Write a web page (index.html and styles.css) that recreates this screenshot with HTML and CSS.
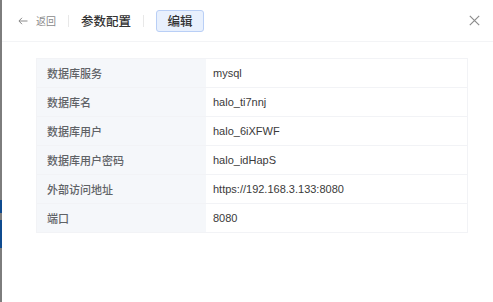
FILE: index.html
```html
<!DOCTYPE html>
<html lang="zh">
<head>
<meta charset="utf-8">
<link rel="stylesheet" href="styles.css">
</head>
<body>
<div class="frame">
  <div class="edge">
    <span class="edge-gray1"></span>
    <span class="edge-blue1"></span>
    <span class="edge-gray2"></span>
    <span class="edge-blue2"></span>
    <span class="edge-gray3"></span>
  </div>
  <div class="panel">
    <header class="head">
      <div class="back">
        <svg class="arrow" width="10" height="8" viewBox="0 0 10 8"><path d="M4 0.8 L0.9 4 L4 7.2 M1 4 H9.5" fill="none" stroke="#8a8a8a" stroke-width="1"/></svg>
        <span>返回</span>
      </div>
      <span class="sep"></span>
      <h1 class="title">参数配置</h1>
      <span class="sep"></span>
      <button class="edit">编辑</button>
      <svg class="close" width="11" height="11" viewBox="0 0 11 11"><path d="M0.8 0.8 L10.2 10.2 M10.2 0.8 L0.8 10.2" stroke="#8c8c8c" stroke-width="1.2" fill="none"/></svg>
    </header>
    <div class="body">
      <table class="info">
        <tr><th>数据库服务</th><td>mysql</td></tr>
        <tr><th>数据库名</th><td>halo_ti7nnj</td></tr>
        <tr><th>数据库用户</th><td>halo_6iXFWF</td></tr>
        <tr><th>数据库用户密码</th><td>halo_idHapS</td></tr>
        <tr><th>外部访问地址</th><td>https://192.168.3.133:8080</td></tr>
        <tr><th>端口</th><td>8080</td></tr>
      </table>
    </div>
  </div>
</div>
</body>
</html>
```

FILE: styles.css
```css
html, body {
  margin: 0;
  padding: 0;
  background: #fff;
}
body {
  width: 493px;
  height: 302px;
  overflow: hidden;
  font-family: "Liberation Sans", "Noto Sans CJK SC", sans-serif;
}
.frame {
  display: flex;
  height: 302px;
}
.edge {
  width: 2px;
  display: flex;
  flex-direction: column;
  flex: none;
}
.edge span { display: block; }
.edge-gray1 { height: 200px; background: #7d7d7d; }
.edge-blue1 { height: 13px; background: #0f4b8f; }
.edge-gray2 { height: 7px; background: #7d7d7d; }
.edge-blue2 { height: 28px; background: #0f4b8f; }
.edge-gray3 { flex: 1; background: #7d7d7d; }
.panel {
  flex: 1;
  display: flex;
  flex-direction: column;
}
.head {
  height: 41px;
  border-bottom: 1px solid #f3f4f6;
  display: flex;
  align-items: center;
  padding: 0 0 0 16px;
}
.back {
  display: flex;
  align-items: center;
  color: #8a8a8a;
  font-size: 10px;
}
.arrow { margin-right: 8px; }
.sep {
  width: 1px;
  height: 12px;
  background: #e8e8e8;
  margin: 0 12px;
}
.title {
  margin: 0;
  font-size: 12.5px;
  font-weight: 500;
  color: #333;
}
.edit {
  width: 48px;
  height: 22px;
  background: #e8f0fd;
  border: 1px solid #b9cff6;
  border-radius: 3px;
  font-family: inherit;
  font-size: 12.5px;
  font-weight: 500;
  color: #333;
  padding: 0;
}
.close {
  margin-left: auto;
  margin-right: 13px;
}
.body {
  padding: 16px 0 0 34px;
}
.info {
  border-collapse: collapse;
  width: 432px;
  font-size: 11px;
  border: 1px solid #f2f3f6;
}
.info th, .info td {
  height: 28px;
  padding: 0 0 0 10px;
  text-align: left;
  border-top: 1px solid #f2f3f6;
}
.info th {
  width: 159px;
  background: #f5f7fa;
  color: #5f6266;
  font-weight: 500;
}
.info td {
  color: #3a3a3a;
  padding-left: 7px;
}
```
